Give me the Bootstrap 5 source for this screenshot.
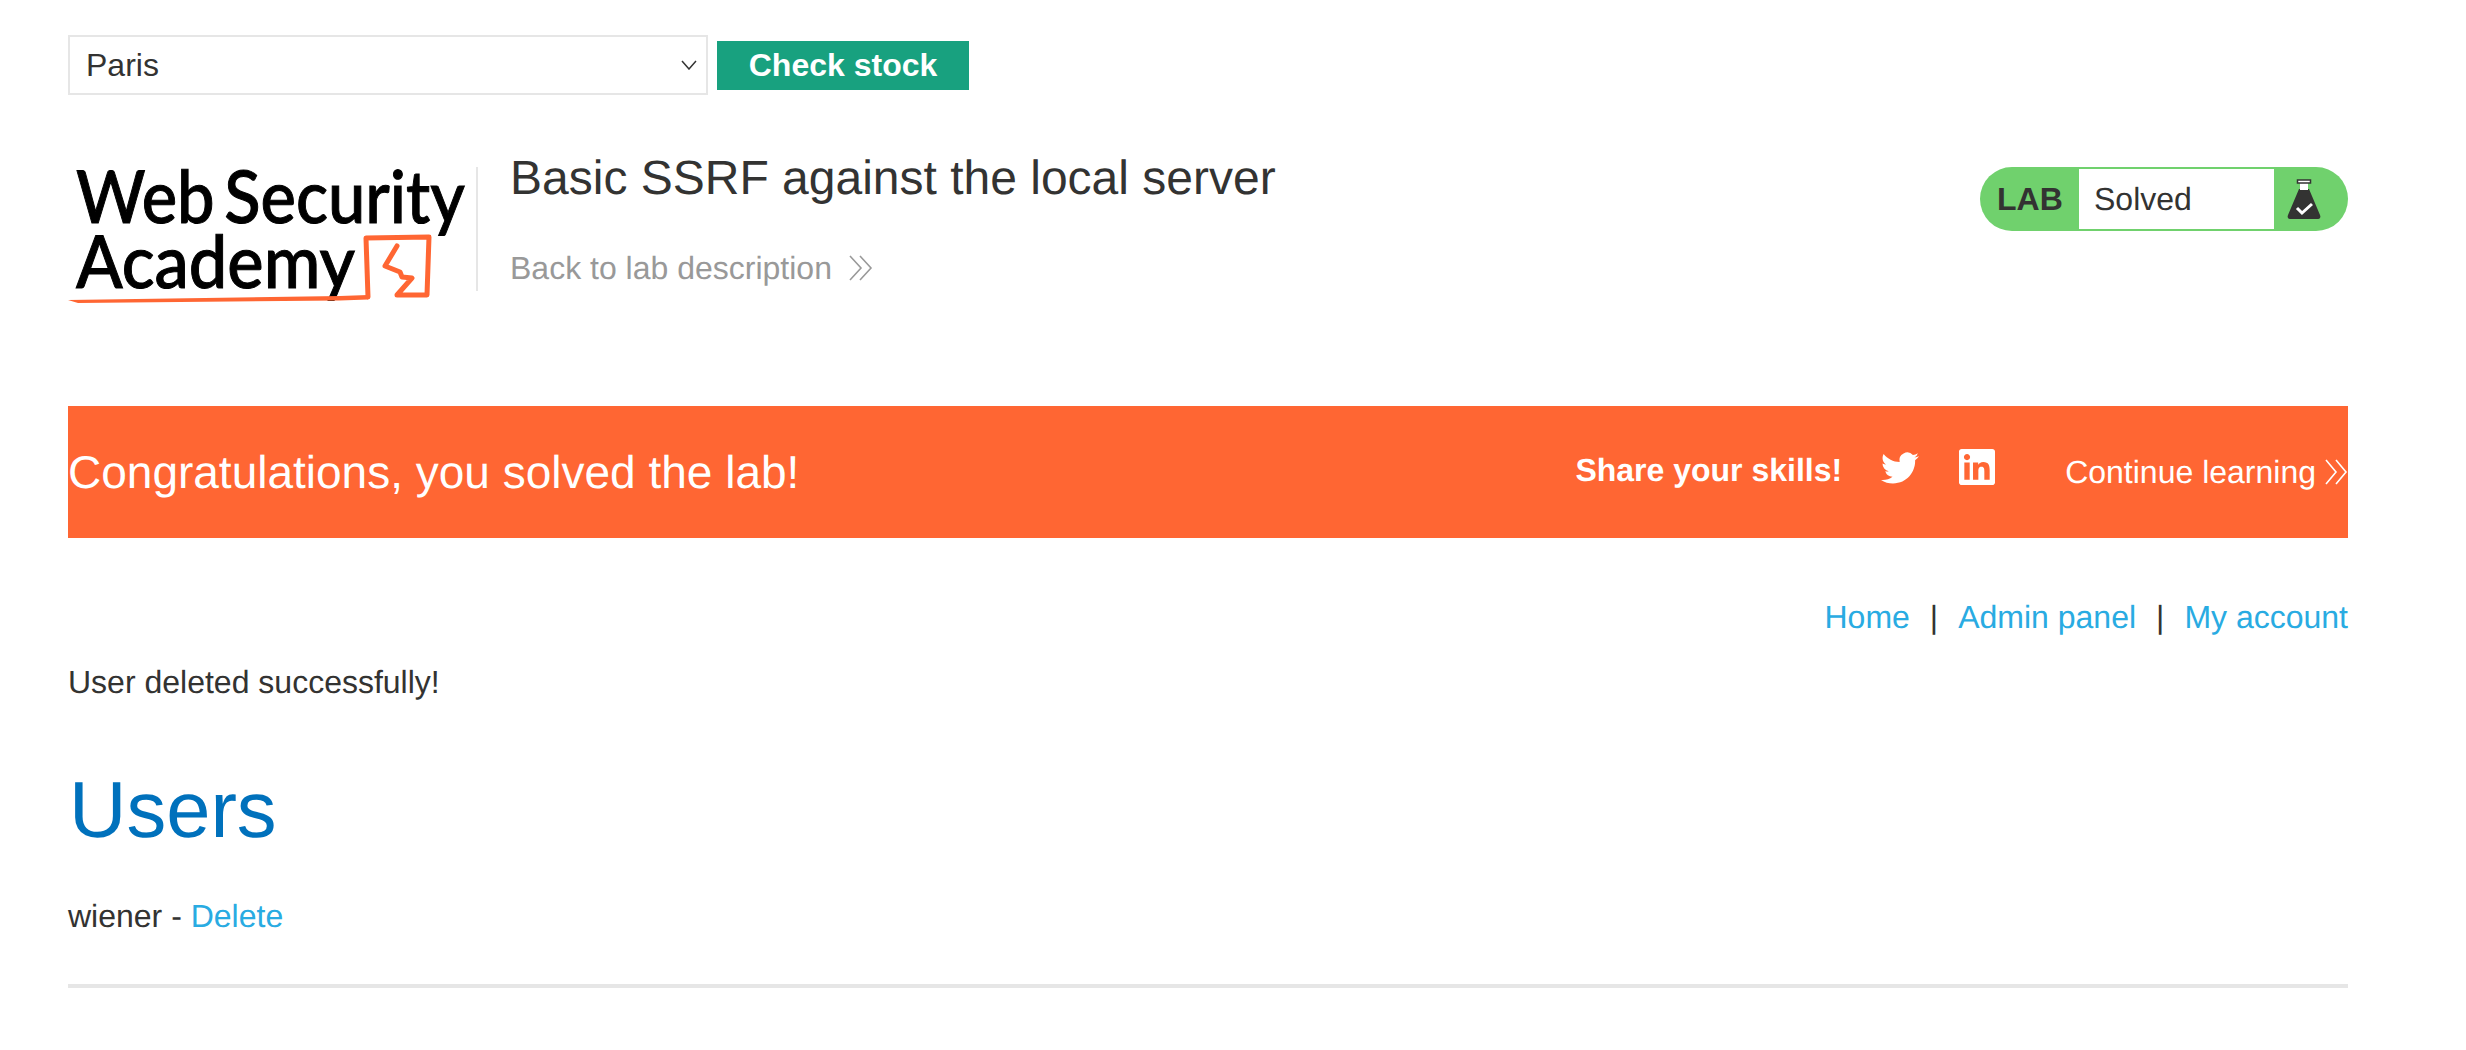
<!DOCTYPE html>
<html lang="en">
<head>
<meta charset="utf-8">
<title>Basic SSRF against the local server</title>
<link href="https://cdn.jsdelivr.net/npm/bootstrap@5.3.0/dist/css/bootstrap.min.css" rel="stylesheet">
<style>
html, body { background: #fff; }
body { font-family: "Liberation Sans", Arial, sans-serif; font-size: 32px; line-height: 40px; color: #333332; text-rendering: geometricPrecision; }
a { text-decoration: none; color: #29abe2; }
.wrap { padding: 35px 118px 0 68px; }
.stock-select.form-select { width: 640px; height: 60px; border: 2px solid #e6e6e6; border-radius: 0; font-size: 32px; line-height: 40px; color: #333332; padding: 0 40px 0 16px; margin-right: 9px; box-shadow: none;
  background-image: url("data:image/svg+xml,%3csvg xmlns='http://www.w3.org/2000/svg' viewBox='0 0 16 10'%3e%3cpath fill='none' stroke='%23333332' stroke-width='1.5' d='M1 1l7 8 7-8'/%3e%3c/svg%3e");
  background-position: right 9px center; background-size: 16px 10px; }
.stock-btn.btn { height: 49px; width: 252px; padding: 0; border: 0; border-radius: 0; background: #18a17f; color: #fff; font-size: 32px; line-height: 49px; font-weight: 700; }
.lab-head { margin-top: 54px; height: 161px; }
.logo-svg { width: 400px; height: 161px; flex: none; overflow: visible; }
.logo-word { font-family: Lato, "Open Sans", sans-serif; font-weight: 500; font-size: 73px; fill: #000; stroke: #000; stroke-width: 1px; word-spacing: -8px; }
.head-rule { width: 2px; height: 124px; margin: 18px 0 0 8px; background: #e6e6e6; flex: none; }
.head-text { margin-left: 32px; padding-top: 1px; }
.head-title { font-size: 48px; line-height: 58px; font-weight: 400; margin: 0; color: #333332; }
.back-link { display: flex; align-items: center; margin-top: 40px; color: #999; }
.back-link svg { width: 24px; height: 26px; margin-left: 17px; }
.lab-pill { margin: 18px 0 0 auto; width: 368px; height: 64px; background: #70d16d; border-radius: 32px; padding: 2px 0; }
.pill-label { width: 99px; padding-left: 17px; font-weight: 700; line-height: 60px; }
.pill-state { width: 195px; background: #fff; padding-left: 15px; line-height: 60px; height: 60px; }
.pill-icon { width: 74px; }
.pill-icon svg { width: 34px; height: 42px; margin: 10px 0 0 13px; display: block; }
.solved-banner { margin-top: 96px; height: 132px; background: #ff6633; color: #fff; }
.solved-title { font-size: 46px; line-height: 58px; margin: 0; font-weight: 400; }
.share-text { margin-left: auto; font-weight: 700; margin-top: -4px; }
.bird { width: 38px; height: 38px; margin: -8px 0 0 39px; }
.linked { width: 36px; height: 36px; margin: -10px 0 0 40px; }
.continue-link { color: #fff; margin-left: 70px; display: flex; align-items: center; }
.continue-link svg { width: 23px; height: 26px; margin-left: 9px; }
.top-links { margin-top: 59px; }
.top-links span { margin: 0 20px; }
.done-msg { margin: 25px 0 0; }
.users-head { font-size: 79.500px; line-height: 96px; font-weight: 400; color: #0071bc; margin: 60px 0 0; padding-left: 1px; }
.user-row { margin: 38px 0 0; }
.end-rule { margin: 48px 0 0; height: 4px; border: 0; background: #e6e6e6; opacity: 1; }
</style>
</head>
<body>
<div class="wrap">
  <form class="d-flex align-items-center">
    <select class="form-select stock-select"><option>Paris</option><option>London</option><option>Milan</option></select>
    <button type="button" class="btn stock-btn">Check stock</button>
  </form>

  <header class="d-flex align-items-start lab-head">
    <svg class="logo-svg" viewBox="68 149 400 161">
      <text class="logo-word" x="76" y="223" textLength="389" lengthAdjust="spacingAndGlyphs">Web Security</text>
      <text class="logo-word" x="76" y="288" textLength="279" lengthAdjust="spacingAndGlyphs">Academy</text>
      <path fill="#ff6633" d="M68 300 L340 296 L368 295 L368 299.500 L340 300.500 L78 303 Z"/>
      <path fill="none" stroke="#ff6633" stroke-width="5" stroke-linejoin="round" stroke-linecap="round" d="M368 297 L366 238 L429 237 L427 295 L397 295 L412 278 L402 277 L400 272 L385 266 L397 246"/>
    </svg>
    <div class="head-rule"></div>
    <div class="head-text">
      <h1 class="head-title">Basic SSRF against the local server</h1>
      <a class="back-link" href="#">Back to lab description
        <svg viewBox="0 0 24 26"><path fill="none" stroke="#999" stroke-width="1.6" d="M1 1l11 12L1 25M11 1l11 12-11 12"/></svg>
      </a>
    </div>
    <div class="lab-pill d-flex">
      <div class="pill-label">LAB</div>
      <div class="pill-state">Solved</div>
      <div class="pill-icon">
        <svg viewBox="0 0 34 42">
          <path fill="#333332" d="M12 10h10l11 26c1 2 0 4-2 4H3c-2 0-3-2-2-4z"/>
          <path fill="#fff" d="M13 3h8v8h-8z"/>
          <path fill="#fff" stroke="#333332" stroke-width="1.500" d="M10.500 1h13v3h-13z"/>
          <path fill="none" stroke="#fff" stroke-width="3" d="M10 29l5 5 10-9"/>
        </svg>
      </div>
    </div>
  </header>

  <section class="solved-banner d-flex align-items-center">
    <h4 class="solved-title">Congratulations, you solved the lab!</h4>
    <span class="share-text">Share your skills!</span>
    <svg class="bird" viewBox="0 0 24 24"><path fill="#fff" d="M23.953 4.57a10 10 0 01-2.825.775 4.958 4.958 0 002.163-2.723c-.951.555-2.005.959-3.127 1.184a4.92 4.92 0 00-8.384 4.482C7.69 8.095 4.067 6.13 1.64 3.162a4.822 4.822 0 00-.666 2.475c0 1.71.87 3.213 2.188 4.096a4.904 4.904 0 01-2.228-.616v.06a4.923 4.923 0 003.946 4.827 4.996 4.996 0 01-2.212.085 4.936 4.936 0 004.604 3.417 9.867 9.867 0 01-6.102 2.105c-.39 0-.779-.023-1.17-.067a13.995 13.995 0 007.557 2.209c9.053 0 13.998-7.496 13.998-13.985 0-.21 0-.42-.015-.63A9.935 9.935 0 0024 4.59z"/></svg>
    <svg class="linked" viewBox="0 0 24 24"><path fill="#fff" d="M20.447 20.452h-3.554v-5.569c0-1.328-.027-3.037-1.852-3.037-1.853 0-2.136 1.445-2.136 2.939v5.667H9.351V9h3.414v1.561h.046c.477-.9 1.637-1.85 3.37-1.85 3.601 0 4.267 2.37 4.267 5.455v6.286zM5.337 7.433c-1.144 0-2.063-.926-2.063-2.065 0-1.138.92-2.063 2.063-2.063 1.14 0 2.064.925 2.064 2.063 0 1.139-.925 2.065-2.064 2.065zm1.782 13.019H3.555V9h3.564v11.452zM22.225 0H1.771C.792 0 0 .774 0 1.729v20.542C0 23.227.792 24 1.771 24h20.451C23.2 24 24 23.227 24 22.271V1.729C24 .774 23.2 0 22.222 0h.003z"/></svg>
    <a class="continue-link" href="#">Continue learning
      <svg viewBox="0 0 23 26"><path fill="none" stroke="#fff" stroke-width="1.6" d="M1 1l10 12L1 25M11 1l10 12-10 12"/></svg>
    </a>
  </section>

  <nav class="d-flex justify-content-end top-links">
    <a href="#">Home</a><span>|</span><a href="#">Admin panel</a><span>|</span><a href="#">My account</a>
  </nav>

  <p class="done-msg">User deleted successfully!</p>
  <h1 class="users-head">Users</h1>
  <p class="user-row">wiener - <a href="#">Delete</a></p>
  <hr class="end-rule">
</div>
<script src="https://cdn.jsdelivr.net/npm/bootstrap@5.3.0/dist/js/bootstrap.bundle.min.js"></script>
</body>
</html>
